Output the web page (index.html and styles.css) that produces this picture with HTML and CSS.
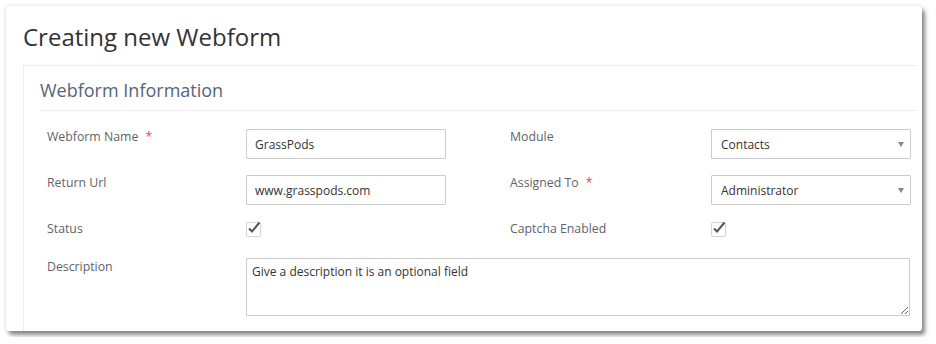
FILE: index.html
```html
<!DOCTYPE html>
<html lang="en">
<head>
    <meta charset="UTF-8">
    <meta name="viewport" content="width=device-width, initial-scale=1.0">
    <title>Creating new Webform</title>
    <link rel="stylesheet" href="styles.css">
</head>
<body>
    <div class="card">
        <h1 class="page-title">Creating new Webform</h1>

        <div class="panel">
            <h3 class="panel-title">Webform Information</h3>

            <div class="form-row">
                <label class="field-label">Webform Name <span class="required">*</span></label>
                <input class="text-input" type="text" value="GrassPods">
                <label class="field-label">Module</label>
                <div class="select-box">Contacts <span class="caret"></span></div>
            </div>

            <div class="form-row">
                <label class="field-label">Return Url</label>
                <input class="text-input" type="text" value="www.grasspods.com">
                <label class="field-label">Assigned To <span class="required">*</span></label>
                <div class="select-box">Administrator <span class="caret"></span></div>
            </div>

            <div class="form-row check-row">
                <label class="field-label">Status</label>
                <span class="check-box">
                    <svg width="16" height="16" viewBox="0 0 16 16"><path d="M3 8.5 L6 11.5 L13.5 2.5" fill="none" stroke="#555" stroke-width="2"/></svg>
                </span>
                <label class="field-label">Captcha Enabled</label>
                <span class="check-box">
                    <svg width="16" height="16" viewBox="0 0 16 16"><path d="M3 8.5 L6 11.5 L13.5 2.5" fill="none" stroke="#555" stroke-width="2"/></svg>
                </span>
            </div>

            <div class="form-row">
                <label class="field-label">Description</label>
                <textarea class="text-area">Give a description it is an optional field</textarea>
            </div>
        </div>
    </div>
</body>
</html>
```

FILE: styles.css
```css
body {
    margin: 0;
    background-color: #fff;
    font-family: "Open Sans", "Noto Sans", sans-serif;
}
.card {
    margin: 6px;
    width: 916px;
    height: 325px;
    box-sizing: border-box;
    padding: 13px 0 0 17px;
    background-color: #fff;
    border-radius: 3px;
    overflow: hidden;
    box-shadow: 0 0 4px rgba(0,0,0,0.15), 3px 4px 4px rgba(0,0,0,0.45);
}
.page-title {
    margin: 0 0 10px 0;
    font-size: 24px;
    line-height: 36px;
    font-weight: normal;
    color: #333;
}
.panel {
    border-top: 1px solid #eee;
    border-left: 1px solid #eee;
    height: 300px;
    margin-right: 5px;
}
.panel-title {
    margin: 0 0 0 16px;
    padding: 10px 0 6px 0;
    font-size: 18px;
    line-height: 28px;
    font-weight: normal;
    color: #556678;
    border-bottom: 1px solid #eee;
}
.form-row {
    display: grid;
    grid-template-columns: 199px 264px 201px 200px;
    align-items: start;
    margin-left: 23px;
    margin-bottom: 13px;
}
.panel-title + .form-row {
    margin-top: 15px;
}
.check-row {
    margin-bottom: 18px;
}
.field-label {
    padding-top: 2px;
    font-size: 12.3px;
    line-height: 18px;
    color: #5f6368;
}
.required {
    color: #e44;
    margin-left: 4px;
}
.text-input, .select-box {
    margin-top: 3px;
    width: 200px;
    height: 30px;
    box-sizing: border-box;
    border: 1px solid #ccc;
    border-radius: 1px;
    padding: 0 8px;
    font-family: inherit;
    font-size: 12px;
    color: #333;
}
.select-box {
    position: relative;
    line-height: 29px;
    padding-left: 9px;
}
.caret {
    position: absolute;
    right: 6px;
    top: 12px;
    border-left: 3.5px solid transparent;
    border-right: 3.5px solid transparent;
    border-top: 5px solid #888;
}
.check-box {
    margin-top: 4px;
    width: 15px;
    height: 15px;
    box-sizing: border-box;
    border: 1px solid #d4d4d4;
    border-radius: 2px;
    position: relative;
}
.check-box svg {
    position: absolute;
    left: -1px;
    top: -3px;
}
.text-area {
    grid-column: 2 / 5;
    margin-top: 2px;
    width: 664px;
    height: 58px;
    box-sizing: border-box;
    border: 1px solid #ccc;
    border-radius: 1px;
    padding: 4px 5px;
    font-family: inherit;
    font-size: 12px;
    color: #333;
}
```
